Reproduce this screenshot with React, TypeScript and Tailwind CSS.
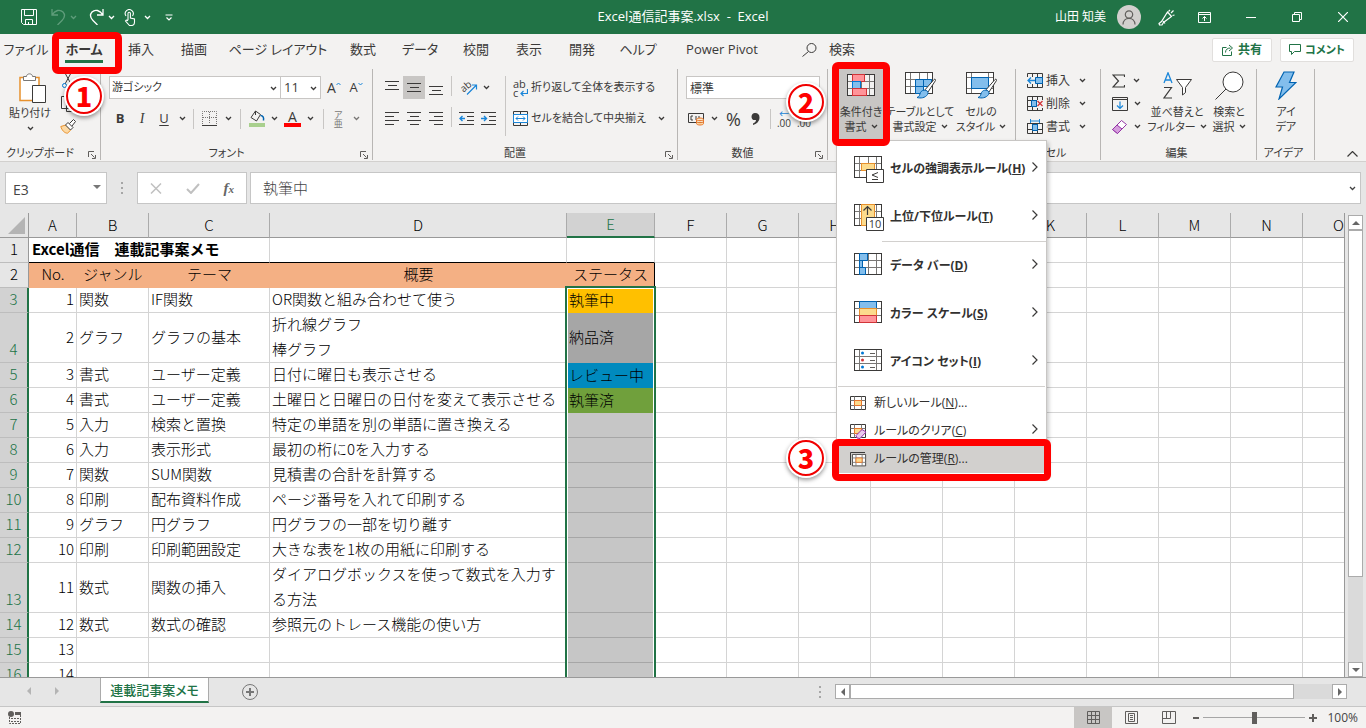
import { useState } from "react";
import type { ReactNode } from "react";
import clsx from "clsx";

/*
  Spreadsheet window.

  Top to bottom:
   - TitleBar   : quick access, file name, account, window buttons
   - TabStrip   : ribbon tabs, search, share / comment
   - Ribbon     : command groups of the Home tab (+ conditional format menu)
   - FormulaBar : name box, fx buttons, formula input
   - Sheet      : the cell table and its vertical scroll bar
   - SheetTabs / StatusBar

  The numbered red frames mark the three steps of the how-to.
*/

/* ---------- data ---------- */

const TABS = [
  { label: "ファイル", width: "w-[52px]" },
  { label: "ホーム", width: "w-[64px]", active: true },
  { label: "挿入", width: "w-[50px]" },
  { label: "描画", width: "w-[56px]" },
  { label: "ページ レイアウト", width: "w-[112px]" },
  { label: "数式", width: "w-[58px]" },
  { label: "データ", width: "w-[56px]" },
  { label: "校閲", width: "w-[56px]" },
  { label: "表示", width: "w-[50px]" },
  { label: "開発", width: "w-[56px]" },
  { label: "ヘルプ", width: "w-[56px]" },
  { label: "Power Pivot", width: "w-[112px]" },
];

type Row = {
  n: number;
  no: number;
  genre?: string;
  theme?: string;
  summary?: string[];
  status?: string;
  fill?: string;
};

const ROWS: Row[] = [
  { n: 3, no: 1, genre: "関数", theme: "IF関数", summary: ["OR関数と組み合わせて使う"], status: "執筆中", fill: "bg-[#ffc000]" },
  { n: 4, no: 2, genre: "グラフ", theme: "グラフの基本", summary: ["折れ線グラフ", "棒グラフ"], status: "納品済", fill: "bg-[#a6a6a6]" },
  { n: 5, no: 3, genre: "書式", theme: "ユーザー定義", summary: ["日付に曜日も表示させる"], status: "レビュー中", fill: "bg-[#008abe]" },
  { n: 6, no: 4, genre: "書式", theme: "ユーザー定義", summary: ["土曜日と日曜日の日付を変えて表示させる"], status: "執筆済", fill: "bg-[#70a03c]" },
  { n: 7, no: 5, genre: "入力", theme: "検索と置換", summary: ["特定の単語を別の単語に置き換える"] },
  { n: 8, no: 6, genre: "入力", theme: "表示形式", summary: ["最初の桁に0を入力する"] },
  { n: 9, no: 7, genre: "関数", theme: "SUM関数", summary: ["見積書の合計を計算する"] },
  { n: 10, no: 8, genre: "印刷", theme: "配布資料作成", summary: ["ページ番号を入れて印刷する"] },
  { n: 11, no: 9, genre: "グラフ", theme: "円グラフ", summary: ["円グラフの一部を切り離す"] },
  { n: 12, no: 10, genre: "印刷", theme: "印刷範囲設定", summary: ["大きな表を1枚の用紙に印刷する"] },
  { n: 13, no: 11, genre: "数式", theme: "関数の挿入", summary: ["ダイアログボックスを使って数式を入力す", "る方法"] },
  { n: 14, no: 12, genre: "数式", theme: "数式の確認", summary: ["参照元のトレース機能の使い方"] },
  { n: 15, no: 13 },
  { n: 16, no: 14 },
];

const EMPTY_COLS = ["F", "G", "H", "I", "J", "K", "L", "M", "N", "O"];

/* ---------- small shared pieces ---------- */

function Chevron({ className = "" }: { className?: string }) {
  return (
    <svg viewBox="0 0 7 5" className={clsx("h-[5px] w-[7px] shrink-0", className)} fill="none" stroke="currentColor" strokeWidth="1.3">
      <path d="M1 1l2.5 2.5L6 1" />
    </svg>
  );
}

function Marker({ n, className }: { n: number; className: string }) {
  return (
    <span
      className={clsx(
        "pointer-events-none absolute z-40 grid h-[40px] w-[40px] place-items-center rounded-full bg-white shadow-[0_2px_4px_rgba(0,0,0,0.4)]",
        className
      )}
    >
      <span className="grid h-[36px] w-[36px] place-items-center rounded-full border-2 border-[#f00000] pb-0.5 font-['Noto_Sans_CJK_JP',sans-serif] text-[27px] leading-none font-black text-[#ff0000]">
        {n}
      </span>
    </span>
  );
}

function RedFrame({ className }: { className: string }) {
  return <span aria-hidden className={clsx("pointer-events-none absolute z-30 rounded-md border-[7px] border-[#ff0000]", className)} />;
}

function VRule({ className = "h-6" }: { className?: string }) {
  return <span aria-hidden className={clsx("w-px shrink-0 bg-[#c8c6c4]", className)} />;
}

function ToolButton({
  label,
  children,
  className = "",
}: {
  label: string;
  children: ReactNode;
  className?: string;
}) {
  return (
    <button type="button" aria-label={label} className={clsx("flex h-[23px] shrink-0 items-center justify-center", className)}>
      {children}
    </button>
  );
}

function Group({
  label,
  width,
  launcher = true,
  children,
}: {
  label: string;
  width: string;
  launcher?: boolean;
  children: ReactNode;
}) {
  return (
    <section aria-label={label} className={clsx("relative flex h-[91px] shrink-0 flex-col border-r border-[#b8b6b4]", width)}>
      <div className="flex-1">{children}</div>
      <div className="flex h-[14px] items-center pr-1 text-[11px]">
        <span className={clsx("flex-1 text-center whitespace-nowrap", launcher && "pr-2")}>{label}</span>
        {launcher && (
          <button type="button" aria-label={`${label}の詳細`} className="pt-1">
            <svg viewBox="0 0 8 8" className="h-2 w-2" fill="none" stroke="#605e5c">
              <path d="M.5 6V.5H6M3 3l3.5 3.5M7.5 4v3.5H4" />
            </svg>
          </button>
        )}
      </div>
    </section>
  );
}

/* ---------- icons ---------- */

// 28x22 cell grid, the base of the formatting icons
function GridBase({ fill = "#fff" }: { fill?: string }) {
  return (
    <>
      <rect x=".5" y=".5" width="27" height="21" fill={fill} stroke="#3b3a39" />
      <path d="M5.5 1v20M14.5 1v20M22.5 1v20M1 7.5h26M1 14.5h26" fill="none" stroke="#797775" />
    </>
  );
}

function Brush() {
  return (
    <>
      <path d="M29 7.5c1-.8 2 .1 1.4 1.2L23 20l-3-2.2z" fill="#fff" stroke="#3b3a39" />
      <path d="M20 18.2c2.5.3 3.8 2.3 2.5 4.3-2.3 3.5-7 4-10.5 3 3-1 2.500-3 3.500-5 .9-1.700 2.700-2.500 4.500-2.300z" fill="#83beec" stroke="#0063b1" />
    </>
  );
}

function ConditionalIcon() {
  return (
    <svg viewBox="0 0 29 23" className="h-[23px] w-[29px]">
      <GridBase fill="#f3f2f1" />
      <rect x="5.5" y=".5" width="12" height="7" fill="#ff9499" stroke="#d13438" />
      <rect x="5.5" y="7.5" width="8" height="7" fill="#83beec" stroke="#0078d4" />
      <rect x="5.5" y="14.5" width="14" height="7" fill="#ff9499" stroke="#d13438" />
    </svg>
  );
}

function TableStyleIcon() {
  return (
    <svg viewBox="0 0 31 27" className="h-[27px] w-[31px]">
      <GridBase />
      <path d="M10.5 7.5h16v7h-8v7h-8z" fill="#83beec" stroke="#0063b1" />
      <path d="M18.5 7.5v7M10.5 14.5h8" stroke="#0063b1" />
      <Brush />
    </svg>
  );
}

function CellStyleIcon() {
  return (
    <svg viewBox="0 0 31 27" className="h-[27px] w-[31px]">
      <rect x=".5" y=".5" width="27" height="21" fill="#fff" stroke="#3b3a39" />
      <path d="M5.5 1v20M22.5 1v20M1 5.5h26M1 16.5h26" fill="none" stroke="#797775" />
      <rect x="5.5" y="5.5" width="17" height="11" fill="#83beec" stroke="#0063b1" />
      <Brush />
    </svg>
  );
}

function AlignIcon({ kind }: { kind: "top" | "middle" | "bottom" | "left" | "center" | "right" }) {
  const lines = {
    top: "M0 1.5h14M3 5.5h9M0 9.5h14",
    middle: "M0 3.5h14M3 7.5h9M0 11.5h14",
    bottom: "M0 6.5h14M3 10.5h9M0 14.5h14",
    left: "M0 1.5h14M0 5.5h9M0 9.5h14M0 13.5h9",
    center: "M0 1.5h14M3 5.5h9M0 9.5h14M3 13.5h9",
    right: "M0 1.5h14M5 5.5h9M0 9.5h14M5 13.5h9",
  };
  return (
    <svg viewBox="0 0 14 15" className="h-[15px] w-[14px]" stroke="#3b3a39">
      <path d={lines[kind]} />
    </svg>
  );
}

function IndentIcon({ out }: { out?: boolean }) {
  return (
    <svg viewBox="0 0 15 15" className="h-[15px] w-[15px]" fill="none">
      <path d="M0 1.5h15M8 5.5h7M8 9.5h7M0 13.5h15" stroke="#3b3a39" />
      <path d={out ? "M6 7.5H1M3.5 5L1 7.5 3.5 10" : "M0 7.5h5.5M3 5l2.5 2.5L3 10"} stroke="#1a86d9" strokeWidth="1.4" />
    </svg>
  );
}

function CellsIcon({ kind }: { kind: "insert" | "delete" | "format" }) {
  return (
    <svg viewBox="0 0 16 15" className="h-[15px] w-4" fill="none">
      <path d="M.5.5h15v14H.5zM5.5.5v14M10.5.5v14M.5 4.5h15M.5 10.5h15" stroke="#3b3a39" />
      {kind === "insert" && (
        <>
          <path d="M0 4h9v7H0z" fill="#f3f2f1" />
          <path d="M8.5 4.5h7v6h-7z" fill="#83beec" stroke="#0063b1" />
          <path d="M8 7.5H1M4 4.5l-3 3 3 3" stroke="#1a86d9" strokeWidth="1.3" />
        </>
      )}
      {kind === "delete" && (
        <>
          <path d="M10 4h6v8h-6z" fill="#f3f2f1" />
          <path d="M4.5 4.5h5v6h-5z" fill="#83beec" stroke="#0063b1" />
          <path d="M10.5 5l5 5M15.5 5l-5 5" stroke="#d13438" strokeWidth="1.3" />
        </>
      )}
      {kind === "format" && (
        <>
          <path d="M0 0h16v4H0z" fill="#f3f2f1" />
          <path d="M5.5 5.5h5v6h-5z" fill="#83beec" stroke="#0063b1" />
          <path d="M3.5 0v4M12.5 0v4M4 2h8" stroke="#1a86d9" />
        </>
      )}
    </svg>
  );
}

/* ---------- title bar ---------- */

function TitleBar() {
  return (
    <header className="flex h-[34px] shrink-0 items-center bg-[#217346] text-xs text-white">
      <div className="flex flex-1 items-center">
        <button type="button" aria-label="上書き保存" className="ml-[21px]">
          <svg viewBox="0 0 16 16" className="h-4 w-4" fill="none" stroke="currentColor">
            <path d="M.5.5h15v15h-13l-2-2zM3.5.5v6h9v-6M4.5 15.5v-5h7v5M7.5 13v2" />
          </svg>
        </button>
        <button type="button" aria-label="元に戻す" className="ml-[14px] flex items-center gap-1 text-[#5f9d7b]">
          <svg viewBox="0 0 15 16" className="h-4 w-[15px]" fill="none" stroke="currentColor" strokeWidth="1.3">
            <path d="M1 0v6h6M1 6C4 1 9 0 12 3c3 3.5 1 6.5-1 8.5L6.5 16" />
          </svg>
          <Chevron />
        </button>
        <button type="button" aria-label="やり直し" className="ml-3 flex items-center gap-1">
          <svg viewBox="0 0 15 16" className="h-4 w-[15px]" fill="none" stroke="currentColor" strokeWidth="1.3">
            <path d="M14 0v6H8M14 6C11 1 6 0 3 3c-3 3.5-1 6.5 1 8.5L8.5 16" />
          </svg>
          <Chevron />
        </button>
        <button type="button" aria-label="タッチ/マウス モード" className="ml-[9px] flex items-center gap-2">
          <svg viewBox="0 0 12 17" className="h-[17px] w-3" fill="none" stroke="currentColor" strokeWidth="1.1">
            <path d="M2 7a4 4 0 1 1 6.500 0M4 11V4.500a1.200 1.200 0 0 1 2.400 0V9l4.100 1v3c0 2-1 3.500-3 3.500H5.500L1.500 12c.8-1.200 1.800-1 2.500-.2" />
          </svg>
          <Chevron />
        </button>
        <button type="button" aria-label="クイック アクセス ツール バーのユーザー設定" className="ml-[14px]">
          <svg viewBox="0 0 8 7" className="h-[7px] w-2" fill="none" stroke="currentColor" strokeWidth="1.2">
            <path d="M.5 1h7M1.500 3.500L4 6l2.500-2.500" />
          </svg>
        </button>
      </div>

      <h1 className="text-[13px] whitespace-nowrap">Excel通信記事案.xlsx&nbsp; -&nbsp; Excel</h1>

      <div className="flex flex-1 items-center justify-end">
        <span className="mr-[11px] whitespace-nowrap">山田 知美</span>
        <span className="grid h-6 w-6 place-items-center rounded-full bg-[#d2d0ce]">
          <svg viewBox="0 0 14 15" className="h-[15px] w-[14px]" fill="none" stroke="#605e5c" strokeWidth="1.2">
            <circle cx="7" cy="4.5" r="3.7" />
            <path d="M1 14.5c0-8.3 12-8.3 12 0" />
          </svg>
        </span>
        <button type="button" aria-label="近日公開の機能" className="grid h-[34px] w-[50px] place-items-center">
          <svg viewBox="0 0 17 17" className="h-[17px] w-[17px]" fill="none" stroke="currentColor" strokeWidth="1.2">
            <path d="M9.500 3l4 4.500-8 6-1.500 2.500H1.500L1 14.500l2.500-2zM5 12l2 2.500M10.500 2.500L12 1M13 4l2.500-2.500M14.500 6.500L16.500 6" />
          </svg>
        </button>
        <button type="button" aria-label="リボンの表示オプション" className="grid h-[34px] w-[26px] place-items-center">
          <svg viewBox="0 0 13 11" className="h-[11px] w-[13px]" fill="none" stroke="currentColor">
            <path d="M.5.5h12v10H.5zM.5 2.5h12M6.5 9V4.5M4.5 6.5l2-2 2 2" />
          </svg>
        </button>
        <button type="button" aria-label="最小化" className="ml-[11px] grid h-[34px] w-[46px] place-items-center">
          <span className="h-px w-[10px] bg-white" />
        </button>
        <button type="button" aria-label="元に戻す (縮小)" className="grid h-[34px] w-[46px] place-items-center">
          <svg viewBox="0 0 10 10" className="h-[10px] w-[10px]" fill="none" stroke="currentColor">
            <path d="M.5 2.5h7v7h-7zM2.5 2.5v-2h7v7h-2" />
          </svg>
        </button>
        <button type="button" aria-label="閉じる" className="grid h-[34px] w-[46px] place-items-center">
          <svg viewBox="0 0 10 10" className="h-[10px] w-[10px]" fill="none" stroke="currentColor" strokeWidth="1.2">
            <path d="M0 0l10 10M10 0L0 10" />
          </svg>
        </button>
      </div>
    </header>
  );
}

/* ---------- ribbon tabs ---------- */

function TabStrip() {
  return (
    <nav className="flex h-8 shrink-0 items-center text-[13px] text-[#3b3a39]">
      {TABS.map((t) => (
        <div key={t.label} className={clsx("relative flex shrink-0 justify-center", t.width)}>
          <button
            type="button"
            className={clsx("h-[26px] border-b-3 pt-0.5 whitespace-nowrap", t.active ? "border-[#217346] font-bold" : "border-transparent")}
          >
            {t.label}
          </button>
          {t.active && (
            <>
              <RedFrame className="-top-[5px] -right-1.5 left-0 h-[42px]" />
              <Marker n={1} className="top-[39px] left-3" />
            </>
          )}
        </div>
      ))}
      <label className="ml-6 flex flex-1 items-center gap-3">
        <svg viewBox="0 0 15 14" className="h-[14px] w-[15px] shrink-0" fill="none" stroke="currentColor">
          <circle cx="9.5" cy="5" r="4.5" />
          <path d="M6.5 8.5L.5 13.5" />
        </svg>
        <input aria-label="検索" placeholder="検索" className="w-full bg-transparent outline-none placeholder:text-[#3b3a39]" />
      </label>
      <div className="flex gap-2 pr-3 text-xs font-bold text-[#217346]">
        <button type="button" className="flex h-6 w-[60px] items-center justify-center gap-1 rounded-xs border border-[#e1dfdd] bg-white whitespace-nowrap">
          <svg viewBox="0 0 12 12" className="h-3 w-3" fill="none" stroke="currentColor">
            <path d="M4.5 3.5h-4v8h9v-4M3.5 8.5c0-3 2-4.5 5-4.5M7 1l3.5 3L7 7" />
          </svg>
          共有
        </button>
        <button type="button" className="flex h-6 w-[74px] items-center justify-center gap-1 rounded-xs border border-[#e1dfdd] bg-white text-[11px] whitespace-nowrap">
          <svg viewBox="0 0 12 12" className="h-3 w-3" fill="none" stroke="currentColor">
            <path d="M.5.5h11v7h-6l-3 3v-3h-2z" />
          </svg>
          コメント
        </button>
      </div>
    </nav>
  );
}

/* ---------- ribbon groups ---------- */

function ClipboardGroup() {
  return (
    <Group label="クリップボード" width="w-[101px]">
      <div className="flex">
        <button type="button" className="flex w-[60px] flex-col items-center pt-1">
          <svg viewBox="0 0 28 31" className="ml-1.5 h-[31px] w-7" fill="none">
            <path d="M1 4.5h19v23H1z" fill="#fff" stroke="#e8912d" strokeWidth="1.5" />
            <path d="M4.5 7.500v-4h3c0-3.500 6-3.500 6 0h3v4z" fill="#fff" stroke="#797775" />
            <path d="M13.5 12.500h13v17h-13z" fill="#fff" stroke="#3b3a39" />
          </svg>
          <span className="text-[11px] leading-[17px] whitespace-nowrap">貼り付け</span>
          <Chevron className="mt-[5px]" />
        </button>
        <div className="flex flex-col">
          <ToolButton label="切り取り">
            <svg viewBox="0 0 12 15" className="h-[15px] w-3" fill="none">
              <path d="M3 0l6 11M9 0L3 11" stroke="#3b3a39" />
              <circle cx="2.5" cy="12.5" r="2" stroke="#0078d4" />
              <circle cx="9.5" cy="12.5" r="2" stroke="#0078d4" />
            </svg>
          </ToolButton>
          <ToolButton label="コピー">
            <svg viewBox="0 0 14 16" className="h-4 w-[14px]" fill="#fff" stroke="#3b3a39">
              <path d="M.5.5h7v12h-7zM5.5 3.5h5l3 3v9h-8z" />
            </svg>
          </ToolButton>
          <ToolButton label="書式のコピー/貼り付け">
            <svg viewBox="0 0 16 15" className="h-[15px] w-4" fill="none">
              <path d="M.8 7.500l5-1.500 5 5-3.300 3.200c-3 0-5.700-3-6.700-6.700z" fill="#fcd9a4" stroke="#e8912d" />
              <path d="M5.500 6l2.500-2.500 5 5-2.500 2.500zM9.500 4.500l4-4 2 2-3.500 4.500" fill="#fff" stroke="#3b3a39" />
            </svg>
          </ToolButton>
        </div>
      </div>
    </Group>
  );
}

function FontGroup() {
  return (
    <Group label="フォント" width="w-[272px]">
      <div className="flex items-center pt-[7px] pl-2">
        <label className="relative">
          <select aria-label="フォント名" className="h-[23px] w-[172px] appearance-none border border-[#c8c6c4] bg-white pl-[2px] text-[11px]">
            <option>游ゴシック</option>
          </select>
          <Chevron className="absolute top-[10px] right-1" />
        </label>
        <label className="relative">
          <select aria-label="フォント サイズ" className="h-[23px] w-10 appearance-none border border-l-0 border-[#c8c6c4] bg-white pl-[3px] text-[13px]">
            <option>11</option>
          </select>
          <Chevron className="absolute top-[10px] right-1" />
        </label>
        <ToolButton label="フォント サイズの拡大" className="w-[22px] pl-1 text-sm">
          A
          <svg viewBox="0 0 5 4" className="mb-2 h-1 w-[5px]" fill="none" stroke="#1a86d9">
            <path d="M.5 3l2-2 2 2" />
          </svg>
        </ToolButton>
        <ToolButton label="フォント サイズの縮小" className="w-[22px] pl-1 text-[13px]">
          A
          <svg viewBox="0 0 5 4" className="mb-2 h-1 w-[5px]" fill="none" stroke="#1a86d9">
            <path d="M.5 1l2 2 2-2" />
          </svg>
        </ToolButton>
      </div>
      <div className="flex items-center pt-2 pl-2 text-[13px]">
        <ToolButton label="太字" className="w-[22px] font-bold">B</ToolButton>
        <ToolButton label="斜体" className="w-[22px] font-['Liberation_Serif',serif] text-sm italic">I</ToolButton>
        <ToolButton label="下線" className="w-[22px] underline underline-offset-2">U</ToolButton>
        <ToolButton label="下線の種類" className="w-[14px]"><Chevron /></ToolButton>
        <VRule className="ml-1 h-5" />
        <ToolButton label="罫線" className="ml-2 gap-2">
          <svg viewBox="0 0 15 15" className="h-[15px] w-[15px]" fill="none">
            <path d="M.5 13V.5h14V13M7.5 1v12M1 6.5h13" stroke="#797775" strokeDasharray="1 1" />
            <path d="M0 14.5h15" stroke="#3b3a39" />
          </svg>
          <Chevron />
        </ToolButton>
        <VRule className="ml-2 h-5" />
        <ToolButton label="塗りつぶしの色" className="ml-2 gap-1.5">
          <svg viewBox="0 0 16 17" className="h-[17px] w-4" fill="none">
            <path d="M6.500 1L2 7.500 7.500 11l4-6.500L6.500 1v4" stroke="#3b3a39" />
            <path d="M11.500 5.500c2.500 0 3.500 2 3 5" stroke="#0063b1" strokeWidth="1.500" />
            <path d="M0 13h16v4H0z" fill="#a9d08e" />
          </svg>
          <Chevron />
        </ToolButton>
        <ToolButton label="フォントの色" className="ml-1.5 gap-1.5">
          <span className="border-b-4 border-[#ff0000] px-1 text-sm leading-[13px]">A</span>
          <Chevron />
        </ToolButton>
        <VRule className="ml-[9px] h-5" />
        <ToolButton label="ふりがなの表示/非表示" className="ml-2.5 gap-2.5 text-[#797775]">
          <span className="flex flex-col text-center text-[9px] leading-[9px]">
            <span>ア</span>
            <span>亜</span>
          </span>
          <Chevron />
        </ToolButton>
      </div>
    </Group>
  );
}

function AlignGroup() {
  return (
    <Group label="配置" width="w-[305px]">
      <div className="flex pt-[7px] pl-2">
        <div className="grid grid-cols-[22px_22px_22px_9px_38px] content-start gap-y-2">
          <ToolButton label="上揃え"><AlignIcon kind="top" /></ToolButton>
          <ToolButton label="上下中央揃え" className="bg-[#c8c6c4]"><AlignIcon kind="middle" /></ToolButton>
          <ToolButton label="下揃え"><AlignIcon kind="bottom" /></ToolButton>
          <VRule className="ml-1 h-5" />
          <ToolButton label="方向" className="gap-1">
            <svg viewBox="0 0 18 17" className="h-[17px] w-[18px] overflow-visible">
              <text x="0" y="11" fontSize="10" fill="#3b3a39" transform="rotate(-40 5 9)">ab</text>
              <path d="M6 15.500L15.500 6M11 6h4.500v4.500" fill="none" stroke="#1a86d9" strokeWidth="1.200" />
            </svg>
            <Chevron />
          </ToolButton>
          <ToolButton label="左揃え"><AlignIcon kind="left" /></ToolButton>
          <ToolButton label="中央揃え"><AlignIcon kind="center" /></ToolButton>
          <ToolButton label="右揃え"><AlignIcon kind="right" /></ToolButton>
          <VRule className="ml-1 h-5" />
          <span className="flex gap-[7px] pl-[3px]">
            <ToolButton label="インデントを減らす"><IndentIcon out /></ToolButton>
            <ToolButton label="インデントを増やす"><IndentIcon /></ToolButton>
          </span>
        </div>
        <VRule className="ml-[11px] h-[60px]" />
        <div className="flex flex-1 flex-col gap-2 pl-[7px] text-[11px]">
          <button type="button" className="flex h-[23px] items-center gap-[3px] whitespace-nowrap">
            <span className="relative flex w-[15px] flex-col text-left leading-[9px]">
              <span>ab</span>
              <span>c</span>
              <svg viewBox="0 0 8 8" className="absolute right-0 bottom-0 h-2 w-2" fill="none" stroke="#1a86d9" strokeWidth="1.2">
                <path d="M7.500 0v4.500H1M3.500 2L1 4.500 3.500 7" />
              </svg>
            </span>
            折り返して全体を表示する
          </button>
          <button type="button" className="flex h-[23px] items-center gap-[3px] pr-3 whitespace-nowrap">
            <svg viewBox="0 0 15 15" className="h-[15px] w-[15px] shrink-0" fill="none">
              <path d="M.5.5h14v14H.5zM7.5.5v14" stroke="#3b3a39" />
              <path d="M.5 3.5h14v8H.5z" fill="#fff" stroke="#1a86d9" />
              <path d="M3 7.5h9M5 5.5l-2 2 2 2M10 5.5l2 2-2 2" stroke="#1a86d9" />
            </svg>
            <span className="flex-1 text-left">セルを結合して中央揃え</span>
            <Chevron />
          </button>
        </div>
      </div>
    </Group>
  );
}

function NumberGroup() {
  return (
    <Group label="数値" width="w-[150px]">
      <div className="pt-[7px] pl-2">
        <input aria-label="表示形式" defaultValue="標準" className="block h-[23px] w-[134px] border border-[#c8c6c4] bg-white pl-[3px]" />
        <div className="flex items-center pt-2">
          <ToolButton label="通貨表示形式" className="gap-1.5 pl-0.5">
            <svg viewBox="0 0 17 14" className="h-[14px] w-[17px]" fill="none">
              <path d="M.5 1.5h15v9H.5z" stroke="#3b3a39" />
              <path d="M5 4H3v4h2M8 4v4M11 4v3" stroke="#3b3a39" />
              <path d="M8.500 7.500c0-2 7-2 7 0v4c0 2-7 2-7 0zM8.500 7.500c0 1.500 7 1.500 7 0M8.500 9.500c0 1.500 7 1.500 7 0" fill="#fcd9a4" stroke="#e8762d" />
            </svg>
            <Chevron />
          </ToolButton>
          <ToolButton label="パーセント スタイル" className="ml-2 text-lg">%</ToolButton>
          <ToolButton label="桁区切りスタイル" className="ml-2.5">
            <svg viewBox="0 0 9 12" className="h-3 w-[9px]" fill="#3b3a39">
              <path d="M4 0c3 0 4.500 1.500 4.500 4.500 0 4-3 6.500-6.500 7.500v-1.500c2-.8 3-2 3-3.500C2 7.500.5 6 .5 3.700.5 1.500 2 0 4 0z" />
            </svg>
          </ToolButton>
          <VRule className="ml-2.5 h-5" />
          {["←", "→"].map((arrow) => (
            <ToolButton key={arrow} label={arrow === "←" ? "小数点以下の表示桁数を増やす" : "小数点以下の表示桁数を減らす"} className="ml-1.5">
              <span className="flex flex-col text-[10px] leading-[9px]">
                <span className="text-[#1a86d9]">{arrow}</span>
                <span>.00</span>
              </span>
            </ToolButton>
          ))}
        </div>
      </div>
    </Group>
  );
}

function BigButton({
  icon,
  lines,
  width,
  chevron = true,
  className = "",
}: {
  icon: ReactNode;
  lines: [string, string];
  width: string;
  chevron?: boolean;
  className?: string;
}) {
  return (
    <button type="button" className={clsx("flex h-[70px] shrink-0 flex-col items-center text-[11px] whitespace-nowrap", width, className)}>
      <span className="grid h-[35px] w-full place-items-center pb-0.5">{icon}</span>
      <span className="leading-[15px]">{lines[0]}</span>
      <span className="flex items-center gap-1 leading-[15px]">
        {lines[1]}
        {chevron && <Chevron />}
      </span>
    </button>
  );
}

function StyleGroup() {
  return (
    <Group label="スタイル" width="w-[188px]" launcher={false}>
      <div className="flex pl-2">
        <div className="relative">
          <BigButton icon={<ConditionalIcon />} lines={["条件付き", "書式"]} width="w-[50px]" className="bg-[#c8c6c4]" />
          <RedFrame className="-inset-x-1 -top-[7px] h-[84px]" />
          <Marker n={2} className="top-[13px] -left-[50px]" />
          <ConditionalMenu />
        </div>
        <BigButton icon={<TableStyleIcon />} lines={["テーブルとして", "書式設定"]} width="w-[68px]" />
        <BigButton icon={<CellStyleIcon />} lines={["セルの", "スタイル"]} width="w-[54px]" />
      </div>
    </Group>
  );
}

function CellsGroup() {
  const items = [
    { label: "挿入", kind: "insert" as const },
    { label: "削除", kind: "delete" as const },
    { label: "書式", kind: "format" as const },
  ];
  return (
    <Group label="セル" width="w-[85px]" launcher={false}>
      <div className="flex flex-col pl-[11px]">
        {items.map((i) => (
          <button key={i.label} type="button" className="flex h-[23px] items-center gap-[3px]">
            <CellsIcon kind={i.kind} />
            {i.label}
            <Chevron className="ml-1.5" />
          </button>
        ))}
      </div>
    </Group>
  );
}

function EditGroup() {
  return (
    <Group label="編集" width="w-[156px]" launcher={false}>
      <div className="flex pl-[11px]">
        <div className="flex w-9 flex-col items-start">
          <ToolButton label="合計" className="gap-2">
            <svg viewBox="0 0 13 14" className="h-[14px] w-[13px]" fill="none" stroke="#3b3a39" strokeWidth="1.200">
              <path d="M12.500 3V1H1l5.500 6L1 13h11.500v-2" />
            </svg>
            <Chevron />
          </ToolButton>
          <ToolButton label="フィル" className="gap-1.5">
            <svg viewBox="0 0 16 14" className="h-[14px] w-4" fill="none">
              <path d="M.5.5h15v13H.5zM.5 2.5h15" stroke="#3b3a39" />
              <path d="M8 4.500v7M5 8.500l3 3 3-3" stroke="#1a86d9" strokeWidth="1.200" />
            </svg>
            <Chevron />
          </ToolButton>
          <ToolButton label="クリア" className="gap-1.5">
            <svg viewBox="0 0 16 14" className="h-[14px] w-4" fill="none" stroke="#9333a5">
              <path d="M9.500.5l5 4-9 9-5-4z" fill="#fff" />
              <path d="M5 5l5 4-4.500 4.500-5-4z" fill="#d59ddd" />
            </svg>
            <Chevron />
          </ToolButton>
        </div>
        <BigButton
          width="w-[58px]"
          lines={["並べ替えと", "フィルター"]}
          icon={
            <svg viewBox="0 0 29 27" className="h-[27px] w-[29px]" fill="none">
              <path d="M1 11L5 .8 9 11M2.300 8h5.500" stroke="#1a86d9" strokeWidth="1.300" />
              <path d="M1 15.500h7.500L1 26h8" stroke="#3b3a39" strokeWidth="1.200" />
              <path d="M13.500 7.500h15l-6 8v5l-3 2.500v-7.500z" fill="#fff" stroke="#3b3a39" />
            </svg>
          }
        />
        <BigButton
          width="w-[46px]"
          lines={["検索と", "選択"]}
          icon={
            <svg viewBox="0 0 29 29" className="h-[29px] w-[29px]" fill="none" stroke="#3b3a39">
              <circle cx="18" cy="11" r="10" fill="#fff" />
              <path d="M11 18L.5 28.500" />
            </svg>
          }
        />
      </div>
    </Group>
  );
}

function IdeaGroup() {
  return (
    <Group label="アイデア" width="w-[58px]" launcher={false}>
      <BigButton
        width="w-[58px]"
        chevron={false}
        lines={["アイ", "デア"]}
        icon={
          <svg viewBox="0 0 22 29" className="h-[29px] w-[22px]" fill="#83beec" stroke="#0063b1" strokeWidth="1.2">
            <path d="M9 1h10l-4.500 10.500H21L4 28l3.500-12H1z" />
          </svg>
        }
      />
    </Group>
  );
}

function Ribbon() {
  return (
    <div className="relative z-20 flex h-24 shrink-0 border-b border-[#d2d0ce] pt-[3px] text-xs text-[#3b3a39]">
      <ClipboardGroup />
      <FontGroup />
      <AlignGroup />
      <NumberGroup />
      <StyleGroup />
      <CellsGroup />
      <EditGroup />
      <IdeaGroup />
      <button type="button" aria-label="リボンを折りたたむ" className="ml-auto self-end pr-2 pb-1">
        <svg viewBox="0 0 11 6" className="h-1.5 w-[11px]" fill="none" stroke="currentColor" strokeWidth="1.2">
          <path d="M.5 5.500l5-5 5 5" />
        </svg>
      </button>
    </div>
  );
}

/* ---------- conditional formatting menu ---------- */

function MenuIcon({ kind }: { kind: string }) {
  return (
    <svg viewBox="0 0 30 27" className="h-[27px] w-[30px] shrink-0">
      <GridBase />
      {kind === "H" && (
        <>
          <rect x="7.5" y="7.5" width="13" height="7" fill="#fcdb8d" stroke="#e8912d" />
          <path d="M12.5 13.5h17v13h-17z" fill="#fff" stroke="#3b3a39" />
          <path d="M24 16.500l-6 2.500 6 2.500M18 23.500h6" fill="none" stroke="#3b3a39" />
        </>
      )}
      {kind === "T" && (
        <>
          <rect x="7.5" y=".5" width="13" height="21" fill="#fcdb8d" stroke="#e8912d" />
          <path d="M13.5 11V3M9.500 6.500l4-4 4 4" fill="none" stroke="#3b3a39" strokeWidth="1.200" />
          <path d="M12.5 13.5h17v13h-17z" fill="#fff" stroke="#3b3a39" />
          <text x="21" y="24" fontSize="11" fontWeight="400" textAnchor="middle" fill="#3b3a39">10</text>
        </>
      )}
      {kind === "D" && (
        <>
          <path d="M5.5.5h8v7h-5v7h3v7h-6z" fill="#83beec" stroke="#0063b1" />
          <path d="M5.5 7.5h4M5.5 14.5h4" stroke="#0063b1" />
        </>
      )}
      {kind === "S" && (
        <>
          <path d="M5.5.5h17v7h-17z" fill="#83beec" stroke="#0063b1" />
          <path d="M5.5 7.5h17v7h-17z" fill="#fcdb8d" stroke="#e8912d" />
          <path d="M5.5 14.5h17v7h-17z" fill="#ff9499" stroke="#d13438" />
        </>
      )}
      {kind === "I" && (
        <>
          <path d="M6 1h16v6H6zM6 8h16v6H6zM6 15h16v6H6z" fill="#fff" />
          <path d="M16 4.500h5M16 11.500h5M16 18.500h5" stroke="#605e5c" />
          <circle cx="8.5" cy="4" r="1.5" fill="#0078d4" />
          <circle cx="8.5" cy="11" r="1.5" fill="#d13438" />
          <circle cx="8.5" cy="18" r="1.5" fill="#0078d4" />
        </>
      )}
    </svg>
  );
}

function SmallMenuIcon({ kind }: { kind: string }) {
  return (
    <svg viewBox="0 0 17 15" className="h-[15px] w-[17px] shrink-0" fill="none">
      {kind === "R" && <path d="M.5 13V.5H15" stroke="#3b3a39" />}
      <g transform={kind === "R" ? "translate(2 2) scale(.88)" : undefined}>
        <path d="M.5.5h15v13H.5z" fill="#fff" stroke="#3b3a39" />
        <path d="M4.5.5v13M11.5.5v13M.5 4.5h15M.5 9.5h15" stroke="#797775" />
        <path d="M4.5 4.5h7v5h-7z" fill="#fcdb8d" stroke="#e8762d" />
      </g>
      {kind === "C" && <path d="M6 11.500l6-6 4 2.500-6 6.500-3-.5z" fill="#e9c8ee" stroke="#9333a5" />}
    </svg>
  );
}

function MenuArrow() {
  return (
    <svg viewBox="0 0 6 10" className="mb-1 ml-auto h-[10px] w-1.5" fill="none" stroke="#3b3a39" strokeWidth="1.2">
      <path d="M.5.5L5 5 .5 9.5" />
    </svg>
  );
}

function ConditionalMenu() {
  const large = [
    { label: "セルの強調表示ルール", k: "H" },
    { label: "上位/下位ルール", k: "T" },
    { label: "データ バー", k: "D" },
    { label: "カラー スケール", k: "S" },
    { label: "アイコン セット", k: "I" },
  ];
  const small = [
    { label: "新しいルール", k: "N", tail: "..." },
    { label: "ルールのクリア", k: "C", arrow: true },
    { label: "ルールの管理", k: "R", tail: "...", active: true },
  ];
  return (
    <div role="menu" className="absolute top-[71px] left-0 z-20 w-[211px] border border-[#c8c6c4] bg-white pt-1 pb-0.5 text-[#323130] shadow-[2px_2px_4px_rgba(0,0,0,0.2)]">
      {large.map((i) => (
        <div key={i.k}>
          {i.k === "D" && <div className="ml-[45px] h-px bg-[#d2d0ce]" />}
          <button type="button" role="menuitem" className="flex h-12 w-full items-center pr-2 pl-[17px] font-bold whitespace-nowrap">
            <MenuIcon kind={i.k} />
            <span className="ml-1.5">
              {i.label}(<u>{i.k}</u>)
            </span>
            <MenuArrow />
          </button>
        </div>
      ))}
      <div className="mx-px mb-0.5 h-px bg-[#d2d0ce]" />
      {small.map((i) => (
        <div key={i.k} className="relative">
          <button
            type="button"
            role="menuitem"
            className={clsx("flex h-7 w-full items-center pr-2 pl-[13px] whitespace-nowrap", i.active && "bg-[#d2d0ce]")}
          >
            <SmallMenuIcon kind={i.k} />
            <span className="ml-[7px]">
              {i.label}(<u>{i.k}</u>){i.tail}
            </span>
            {i.arrow && <MenuArrow />}
          </button>
          {i.active && (
            <>
              <RedFrame className="-inset-x-[5px] -top-1.5 h-[42px]" />
              <Marker n={3} className="-top-[7px] -left-[51px]" />
            </>
          )}
        </div>
      ))}
    </div>
  );
}

/* ---------- formula bar ---------- */

function Dots() {
  return (
    <span aria-hidden className="flex flex-col gap-[3px]">
      <i className="h-0.5 w-0.5 bg-[#a6a6a6]" />
      <i className="h-0.5 w-0.5 bg-[#a6a6a6]" />
      <i className="h-0.5 w-0.5 bg-[#a6a6a6]" />
    </span>
  );
}

function FormulaBar() {
  return (
    <div className="flex h-[51px] shrink-0 items-start bg-[#e6e6e6] pt-[10px] pr-[5px] pl-[5px] text-[13px] text-[#444]">
      <label className="relative">
        <input aria-label="名前ボックス" defaultValue="E3" className="h-8 w-[102px] border border-[#c6c6c6] bg-white pt-0.5 pl-[7px] text-sm" />
        <svg viewBox="0 0 8 4" className="absolute top-[13px] right-1.5 h-1 w-2" fill="#777">
          <path d="M0 0h8L4 4z" />
        </svg>
      </label>
      <span className="flex h-8 w-[30px] items-center justify-center">
        <Dots />
      </span>
      <div className="flex h-8 w-[110px] items-center justify-around border border-[#c6c6c6] bg-white">
        <button type="button" aria-label="キャンセル">
          <svg viewBox="0 0 12 11" className="h-[11px] w-3" fill="none" stroke="#c0c0c0" strokeWidth="1.5">
            <path d="M1 .5l10 10M11 .5l-10 10" />
          </svg>
        </button>
        <button type="button" aria-label="入力">
          <svg viewBox="0 0 14 11" className="h-[11px] w-[14px]" fill="none" stroke="#c0c0c0" strokeWidth="2">
            <path d="M1 6l4 4 8-9" />
          </svg>
        </button>
        <button type="button" aria-label="関数の挿入" className="font-['Liberation_Serif',serif] text-[15px] font-bold text-[#666] italic">
          f<span className="text-[11px]">x</span>
        </button>
      </div>
      <label className="relative ml-[3px] flex-1">
        <input
          aria-label="数式バー"
          defaultValue="執筆中"
          className="h-8 w-full border border-[#c6c6c6] bg-white pb-0.5 pl-3 font-['Noto_Sans_CJK_JP',sans-serif] text-[15px] font-light"
        />
        <Chevron className="absolute top-[14px] right-[5px]" />
      </label>
    </div>
  );
}

/* ---------- sheet ---------- */

const CELL = "h-[25px] border-r border-b border-[#d4d4d4] p-0 pb-0.5 leading-[22px] whitespace-nowrap";
const HEADING = "h-[25px] bg-[#f4b084] p-0 pb-[3px] text-center leading-[22px] whitespace-nowrap";

function HeadCell({ children, selected }: { children: ReactNode; selected?: boolean }) {
  return (
    <th
      scope="col"
      className={clsx(
        "h-[25px] border-r border-r-[#ababab] p-0 pb-0.5 leading-[21px] font-light",
        selected ? "border-b-2 border-b-[#217346] bg-[#d2d2d2] text-[#217346]" : "border-b border-b-[#999]"
      )}
    >
      {children}
    </th>
  );
}

function RowHead({ n, selected }: { n: number; selected?: boolean }) {
  return (
    <th
      scope="row"
      className={clsx(
        "border-b border-b-[#bdbdbd] p-0 pb-0.5 text-center align-bottom leading-[22px] font-light",
        selected ? "border-r-2 border-r-[#217346] bg-[#d2d2d2] text-[#217346]" : "border-r border-r-[#999] bg-[#e6e6e6]"
      )}
    >
      {n}
    </th>
  );
}

function Blanks() {
  return (
    <>
      {EMPTY_COLS.map((c) => (
        <td key={c} className={CELL} />
      ))}
    </>
  );
}

function Sheet() {
  return (
    <div className="flex min-h-0 flex-1 border-b border-[#999] bg-[#e6e6e6]">
      <div className="relative min-w-0 flex-1 overflow-hidden">
        <table className="w-[1375px] table-fixed border-separate border-spacing-0 font-['Noto_Sans_CJK_JP',sans-serif] text-[15px] font-light text-black [font-feature-settings:normal]">
          <colgroup>
            <col className="w-[29px]" />
            <col className="w-[48px]" />
            <col className="w-[72px]" />
            <col className="w-[121px]" />
            <col className="w-[297px]" />
            <col className="w-[88px]" />
            {EMPTY_COLS.map((c) => (
              <col key={c} className="w-[72px]" />
            ))}
          </colgroup>
          <thead>
            <tr>
              <th className="border-r border-b border-[#999] p-0">
                <svg viewBox="0 0 17 17" className="ml-2 h-[17px] w-[17px]" fill="#b4b4b4">
                  <path d="M17 0v17H0z" />
                </svg>
              </th>
              {["A", "B", "C", "D"].map((c) => (
                <HeadCell key={c}>{c}</HeadCell>
              ))}
              <HeadCell selected>E</HeadCell>
              {EMPTY_COLS.map((c) => (
                <HeadCell key={c}>{c}</HeadCell>
              ))}
            </tr>
          </thead>
          <tbody className="bg-white">
            <tr>
              <RowHead n={1} />
              <td colSpan={3} className={clsx(CELL, "border-b-black pl-[3px] font-bold")}>
                Excel通信　連載記事案メモ
              </td>
              <td className={clsx(CELL, "border-b-black")} />
              <td className={clsx(CELL, "border-b-black")} />
              <Blanks />
            </tr>
            <tr>
              <RowHead n={2} />
              {["No.", "ジャンル", "テーマ", "概要"].map((h) => (
                <td key={h} className={HEADING}>{h}</td>
              ))}
              <td className={clsx(HEADING, "border-r border-black")}>ステータス</td>
              <Blanks />
            </tr>
            {ROWS.map((r) => (
              <tr key={r.n}>
                <RowHead n={r.n} selected />
                <td className={clsx(CELL, "pr-[2px] text-right")}>{r.no}</td>
                <td className={clsx(CELL, "pl-[2px]")}>{r.genre}</td>
                <td className={clsx(CELL, "pl-[2px]")}>{r.theme}</td>
                <td className={clsx(CELL, "pl-[2px]")}>
                  {r.summary?.map((line) => <div key={line} className="not-first:pt-[3px]">{line}</div>)}
                </td>
                <td
                  className={clsx(
                    "h-[25px] p-0 pb-0.5 pl-[2px] leading-[22px] whitespace-nowrap",
                    r.fill ?? "border-b border-[#a6a6a6] bg-[#c6c6c6]",
                    r.n === 3 && "relative"
                  )}
                >
                  {r.status}
                  {/* selection outline, runs on past the last visible row */}
                  {r.n === 3 && (
                    <span aria-hidden className="absolute -top-[2px] -right-px -left-[2px] z-10 h-[900px] border-2 border-[#217346] shadow-[inset_0_0_0_1px_#fff]" />
                  )}
                </td>
                <Blanks />
              </tr>
            ))}
          </tbody>
        </table>
      </div>
      {/* vertical scroll bar */}
      <div className="flex w-[22px] shrink-0 border-l border-[#999] pt-0.5 pl-[3px]">
        <div className="flex w-[15px] flex-col bg-[#dadada]">
          <button type="button" aria-label="上へ" className="grid h-[15px] shrink-0 place-items-center border border-[#ababab] bg-white">
            <svg viewBox="0 0 8 4" className="h-1 w-2" fill="#666"><path d="M0 4h8L4 0z" /></svg>
          </button>
          <div className="h-3/4 border border-[#ababab] bg-white" />
          <button type="button" aria-label="下へ" className="mt-auto grid h-[15px] shrink-0 place-items-center border border-[#ababab] bg-white">
            <svg viewBox="0 0 8 4" className="h-1 w-2" fill="#666"><path d="M0 0h8L4 4z" /></svg>
          </button>
        </div>
      </div>
    </div>
  );
}

/* ---------- bottom bars ---------- */

function SheetTabs() {
  return (
    <div className="flex h-7 shrink-0 bg-[#e6e6e6] text-[13px]">
      <div className="flex h-[26px] w-[100px] items-center gap-6 pl-[27px]">
        <svg viewBox="0 0 4 8" className="h-2 w-1" fill="#b4b4b4"><path d="M4 0v8L0 4z" /></svg>
        <svg viewBox="0 0 4 8" className="h-2 w-1" fill="#b4b4b4"><path d="M0 0v8l4-4z" /></svg>
      </div>
      <button type="button" className="h-[25px] w-[109px] border-x border-b-2 border-x-[#ababab] border-b-[#217346] bg-white pt-0.5 font-medium whitespace-nowrap text-[#217346]">
        連載記事案メモ
      </button>
      <button type="button" aria-label="新しいシート" className="ml-[33px] h-[27px]">
        <svg viewBox="0 0 16 16" className="h-4 w-4" fill="none" stroke="#777">
          <circle cx="8" cy="8" r="7.5" />
          <path d="M8 4v8M4 8h8" strokeWidth="2" />
        </svg>
      </button>
      <div className="ml-auto flex h-[27px] w-[547px] items-center pr-[19px]">
        <Dots />
        <div className="ml-[14px] flex h-[15px] flex-1 bg-[#dadada]">
          <button type="button" aria-label="左へ" className="grid w-[15px] shrink-0 place-items-center border border-[#ababab] bg-white">
            <svg viewBox="0 0 4 8" className="h-2 w-1" fill="#666"><path d="M4 0v8L0 4z" /></svg>
          </button>
          <div className="w-[444px] border border-[#ababab] bg-white" />
          <button type="button" aria-label="右へ" className="ml-auto grid w-[15px] shrink-0 place-items-center border border-[#ababab] bg-white">
            <svg viewBox="0 0 4 8" className="h-2 w-1" fill="#666"><path d="M0 0v8l4-4z" /></svg>
          </button>
        </div>
      </div>
    </div>
  );
}

function StatusBar() {
  const [zoom, setZoom] = useState(100);
  return (
    <footer className="flex h-[22px] shrink-0 items-center border-t border-[#c6c6c6] pr-2 pl-2 text-xs text-[#444]">
      <button type="button" aria-label="マクロの記録" className="mr-auto">
        <svg viewBox="0 0 13 13" className="h-[13px] w-[13px]" fill="#605e5c">
          <path d="M7 1h6v3H7z" />
          <path d="M1.5 6v6.500h11V4M3 7.500h8M3 10.500h8" fill="none" stroke="#605e5c" strokeDasharray="2 1" />
          <circle cx="3" cy="3" r="3" />
        </svg>
      </button>
      <button type="button" aria-label="標準" className="grid h-[21px] w-[38px] place-items-center bg-[#c8c6c4]">
        <svg viewBox="0 0 13 13" className="h-[13px] w-[13px]" fill="none" stroke="#605e5c">
          <path d="M.5.5h12v12H.5zM4.5.5v12M8.5.5v12M.5 4.5h12M.5 8.5h12" />
        </svg>
      </button>
      <button type="button" aria-label="ページ レイアウト" className="grid h-[21px] w-[38px] place-items-center">
        <svg viewBox="0 0 13 13" className="h-[13px] w-[13px]" fill="none" stroke="#605e5c">
          <path d="M.5.5h12v12H.5zM3.5 2.5h6v8h-6zM5 4.5h3M5 6.5h3M5 8.5h3" />
        </svg>
      </button>
      <button type="button" aria-label="改ページ プレビュー" className="grid h-[21px] w-[38px] place-items-center">
        <svg viewBox="0 0 14 13" className="h-[13px] w-[14px]" fill="none" stroke="#605e5c">
          <path d="M.5.5h13v12H.5zM.5 7.5h8v-7M4.5.5v7" />
        </svg>
      </button>
      <button type="button" aria-label="縮小" className="ml-[5px] h-0.5 w-1.5 bg-[#605e5c]" onClick={() => setZoom(zoom - 10)} />
      <input
        type="range"
        aria-label="ズーム"
        min={0}
        max={200}
        value={zoom}
        onChange={(e) => setZoom(Number(e.target.value))}
        className="mx-1 h-3 w-[102px] appearance-none bg-[linear-gradient(#a6a6a6,#a6a6a6)] bg-[length:100%_1px] bg-center bg-no-repeat [&::-webkit-slider-thumb]:h-3 [&::-webkit-slider-thumb]:w-[5px] [&::-webkit-slider-thumb]:appearance-none [&::-webkit-slider-thumb]:bg-[#605e5c]"
      />
      <button type="button" aria-label="拡大" onClick={() => setZoom(zoom + 10)}>
        <svg viewBox="0 0 8 8" className="h-2 w-2" fill="#605e5c">
          <path d="M3 0h2v3h3v2H5v3H3V5H0V3h3z" />
        </svg>
      </button>
      <span className="ml-2.5">{zoom}%</span>
    </footer>
  );
}

export default function App() {
  return (
    <div className="flex h-screen flex-col overflow-hidden bg-[#f3f2f1] font-['Open_Sans','Noto_Sans_CJK_JP',sans-serif] [font-feature-settings:'palt']">
      <TitleBar />
      <TabStrip />
      <Ribbon />
      <FormulaBar />
      <Sheet />
      <SheetTabs />
      <StatusBar />
    </div>
  );
}
